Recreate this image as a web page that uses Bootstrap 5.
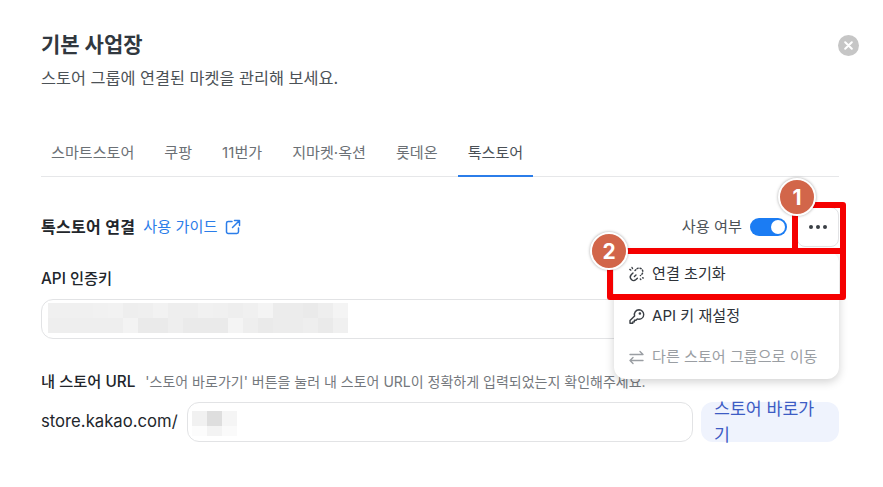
<!DOCTYPE html>
<html lang="ko">
<head>
  <meta charset="UTF-8" />
  <meta name="viewport" content="width=device-width, initial-scale=1.0"/>
  <title>기본 사업장</title>
  <link href="https://cdn.jsdelivr.net/npm/bootstrap@5.3.3/dist/css/bootstrap.min.css" rel="stylesheet" />
  <style>
    body {
      background: #fff;
      font-family: Inter, "Noto Sans CJK KR", sans-serif;
      color: #22262b;
      overflow: hidden;
    }
    .sheet {
      position: relative;
      width: 883px;
      height: 487px;
      padding: 30px 44px 0 41px;
    }
    .sheet-title { font-size: 21px; font-weight: 700; line-height: 30px; color: #31383f; margin: 0; }
    .sheet-sub { font-size: 16.3px; line-height: 24px; color: #4c5257; margin: 6px 0 0; }
    .close-dot {
      position: absolute; top: 35px; left: 838px;
      width: 21px; height: 21px; border-radius: 50%;
      background: #c6c6c6; border: 0; padding: 0;
      display: flex; align-items: center; justify-content: center;
    }
    .store-tabs { margin-top: 41px; border-bottom: 1px solid #e6e7e9; height: 46px; gap: 10px; }
    .store-tabs .nav-link {
      font-size: 15.1px; line-height: 22px; color: #6b7075;
      padding: 11px 10px 0; height: 46px; border-radius: 0; background: none;
    }
    .store-tabs .nav-link.active { color: #4a5056; border-bottom: 2px solid #2b7de9; background: none; }
    .conn-row { margin-top: 26px; height: 48px; }
    .conn-title { font-size: 16px; font-weight: 700; letter-spacing: .3px; color: #22262b; }
    .guide-link { font-size: 15.2px; color: #2b7de9; text-decoration: none; margin-left: 8px; }
    .use-label { font-size: 15.2px; color: #4c5257; margin-right: 8px; }
    .use-toggle { width: 37px; height: 18px; border-radius: 9px; background: #1b7cf3; position: relative; }
    .use-toggle::after {
      content: ""; position: absolute; right: 2px; top: 2px;
      width: 14px; height: 14px; border-radius: 50%; background: #fff;
    }
    .more-btn {
      width: 42px; height: 40px; margin-left: 10px; padding: 0;
      border: 1px solid #e2e3e5; border-radius: 8px; background: #fff;
      display: flex; align-items: center; justify-content: center; gap: 3px;
    }
    .more-btn i { width: 4px; height: 4px; border-radius: 50%; background: #3a3f45; display: block; }
    .field-label { font-size: 15.3px; font-weight: 500; line-height: 20px; color: #22262b; margin: 0; }
    .key-label { margin-top: 18px; }
    .key-box {
      height: 40px; margin-top: 10px; border: 1px solid #e2e3e5; border-radius: 12px; background: #fff;
      padding: 3px 0 0 6px; width: 798px;
    }
    .url-head { margin-top: 32px; }
    .hint { font-size: 14px; color: #74787d; margin-left: 10px; }
    .url-row { margin-top: 10px; height: 40px; }
    .url-prefix { font-size: 16.7px; color: #22262b; width: 146px; flex: none; }
    .url-box { width: 506px; height: 40px; border: 1px solid #e2e3e5; border-radius: 12px; background: #fff; padding: 8px 0 0 4px; flex: none; }
    .go-btn {
      width: 138px; height: 40px; margin-left: 8px; padding: 0 13px; border: 0; border-radius: 12px;
      background: #eff3fd; color: #3d5cc4; font-size: 17.3px; line-height: 26.5px; text-align: left;
      word-break: break-all; white-space: normal;
    }
    .more-menu {
      position: absolute; left: 614px; top: 251px; width: 225px; height: 128px;
      background: #fff; border-radius: 12px; border: 0; padding: 0; min-width: 0;
      box-shadow: 0 3px 10px rgba(0,0,0,.18);
      display: block;
    }
    .more-menu .dropdown-item {
      display: flex; align-items: center; height: 41.5px; padding: 0 14px; gap: 7px;
      font-size: 15.1px; color: #2d3238;
    }
    .more-menu li:first-child .dropdown-item { margin-top: 3px; }
    .more-menu .dropdown-item.disabled { color: #9a9ea3; background: none; }
    .mark-box { position: absolute; z-index: 1010; border: 6px solid #f50000; border-radius: 3px; pointer-events: none; }
    .mark-one { left: 792px; top: 202px; width: 54px; height: 52px; }
    .mark-two { left: 607px; top: 248px; width: 239px; height: 52px; }
    .step-dot {
      position: absolute; z-index: 1020; width: 38px; height: 38px; border-radius: 50%;
      background: #d2664a; color: #fff; font-size: 21px; font-weight: 700;
      border: 2px solid #fff; box-shadow: 0 0 3px rgba(0,0,0,.35);
      display: flex; align-items: center; justify-content: center; line-height: 1;
    }
    .step-one { left: 778px; top: 178px; }
    .step-two { left: 590px; top: 232px; }
  </style>
</head>
<body>
<div class="sheet">
  <h1 class="sheet-title">기본 사업장</h1>
  <p class="sheet-sub">스토어 그룹에 연결된 마켓을 관리해 보세요.</p>
  <button class="close-dot" type="button" aria-label="닫기">
    <svg width="9" height="9" viewBox="0 0 9 9"><path d="M1.2 1.2l6.6 6.6M7.8 1.2L1.2 7.8" stroke="#fff" stroke-width="2" stroke-linecap="round"/></svg>
  </button>

  <ul class="nav store-tabs">
    <li class="nav-item"><a class="nav-link" href="#">스마트스토어</a></li>
    <li class="nav-item"><a class="nav-link" href="#">쿠팡</a></li>
    <li class="nav-item"><a class="nav-link" href="#">11번가</a></li>
    <li class="nav-item"><a class="nav-link" href="#">지마켓·옥션</a></li>
    <li class="nav-item"><a class="nav-link" href="#">롯데온</a></li>
    <li class="nav-item"><a class="nav-link active" href="#">톡스토어</a></li>
  </ul>

  <div class="conn-row d-flex align-items-center">
    <span class="conn-title">톡스토어 연결</span>
    <a class="guide-link d-flex align-items-center gap-2" href="#">사용 가이드
      <svg width="16" height="16" viewBox="0 0 16 16" fill="none" stroke="#2b7de9" stroke-width="1.5" stroke-linecap="round" stroke-linejoin="round"><path d="M7 2.5H3.2A1.7 1.7 0 0 0 1.5 4.2v8.6a1.7 1.7 0 0 0 1.7 1.7h8.6a1.7 1.7 0 0 0 1.7-1.7V9"/><path d="M9.5 1.5h5v5M14.5 1.5L7.5 8.5"/></svg>
    </a>
    <div class="ms-auto d-flex align-items-center">
      <span class="use-label">사용 여부</span>
      <span class="use-toggle"></span>
      <button class="more-btn" type="button" aria-label="더보기"><i></i><i></i><i></i></button>
    </div>
  </div>

  <p class="field-label key-label">API 인증키</p>
  <div class="key-box">
    <svg class="d-block" width="300" height="30" viewBox="0 0 20 2" shape-rendering="crispEdges">
      <g id="blurCells"></g>
    </svg>
  </div>

  <div class="url-head d-flex align-items-center">
    <p class="field-label">내 스토어 URL</p>
    <span class="hint">'스토어 바로가기' 버튼을 눌러 내 스토어 URL이 정확하게 입력되었는지 확인해주세요.</span>
  </div>
  <div class="url-row d-flex align-items-center">
    <span class="url-prefix">store.kakao.com/</span>
    <div class="url-box">
      <svg class="d-block" width="45" height="25" viewBox="0 0 45 25" shape-rendering="crispEdges">
        <rect x="0" y="0" width="15" height="15" fill="#f1f1f1"/><rect x="15" y="0" width="15" height="15" fill="#dedede"/><rect x="30" y="0" width="15" height="15" fill="#f5f5f5"/>
        <rect x="0" y="15" width="15" height="10" fill="#fcfcfc"/><rect x="15" y="15" width="15" height="10" fill="#f3f3f3"/><rect x="30" y="15" width="15" height="10" fill="#fafafa"/>
      </svg>
    </div>
    <button class="go-btn d-flex align-items-center" type="button">스토어 바로가기</button>
  </div>

  <ul class="dropdown-menu more-menu list-unstyled">
    <li><a class="dropdown-item" href="#">
      <svg width="17" height="17" viewBox="0 0 17 17" fill="none" stroke="#3a3f45" stroke-width="1.4" stroke-linecap="round" stroke-linejoin="round"><path d="M7 4.6L8.6 3a3.4 3.4 0 0 1 1.6-.9" stroke-dasharray="1.2 1.7"/><path d="M12 2.2a3.4 3.4 0 0 1 2.6 2.4 3.4 3.4 0 0 1-.6 3.4L12.400 9.600" stroke-dasharray="1.2 1.8"/><path d="M5 7L3.200 8.800a3.400 3.400 0 0 0 4.800 4.800L9.400 12.200"/><path d="M6.400 10.600L8 9"/><path d="M12.300 13l.5.5M14.600 11.800l.6.2M1.800 3.400l1 .7M4 1.500l.5 1"/></svg>
      연결 초기화</a></li>
    <li><a class="dropdown-item" href="#">
      <svg width="17" height="17" viewBox="0 0 17 17" fill="none" stroke="#3a3f45" stroke-width="1.4" stroke-linecap="round" stroke-linejoin="round"><path d="M11 1.800a4.700 4.700 0 0 1 0 9.400 4.800 4.800 0 0 1-1.700-.3l-1.300 1.400H6.400v1.600H4.800v1.300H2v-2.600l4.600-4.700A4.700 4.700 0 0 1 11 1.800z"/><circle cx="11.900" cy="5.500" r=".6"/></svg>
      API 키 재설정</a></li>
    <li><a class="dropdown-item disabled" href="#">
      <svg width="17" height="17" viewBox="0 0 17 17" fill="none" stroke="#9a9ea3" stroke-width="1.4" stroke-linecap="round" stroke-linejoin="round"><path d="M2 5.500h13M12 2.500l3 3M15 11.500H2M5 8.500l-3 3 3 3"/></svg>
      다른 스토어 그룹으로 이동</a></li>
  </ul>

  <div class="mark-box mark-one"></div>
  <div class="mark-box mark-two"></div>
  <div class="step-dot step-one">1</div>
  <div class="step-dot step-two">2</div>
</div>
<script>
  // 가려진 API 키 영역 (모자이크 셀 값)
  const cells = [
    ["f0","f0","f0","f1","f2","ee","ef","f2","ee","ee","f1","f0","ee","f0","f4","ec","ec","ea","ee","f4"],
    ["ee","ee","ee","ee","ee","f3","ea","ea","ee","ea","ea","ea","f4","ee","ea","ec","ec","ee","ea","f0"]
  ];
  const g = document.getElementById("blurCells");
  let cellHtml = "";
  cells.forEach((row, y) => row.forEach((c, x) => {
    cellHtml += `<rect x="${x}" y="${y}" width="1" height="1" fill="#${c}${c}${c}"/>`;
  }));
  g.innerHTML = cellHtml;
</script>
</body>
</html>
